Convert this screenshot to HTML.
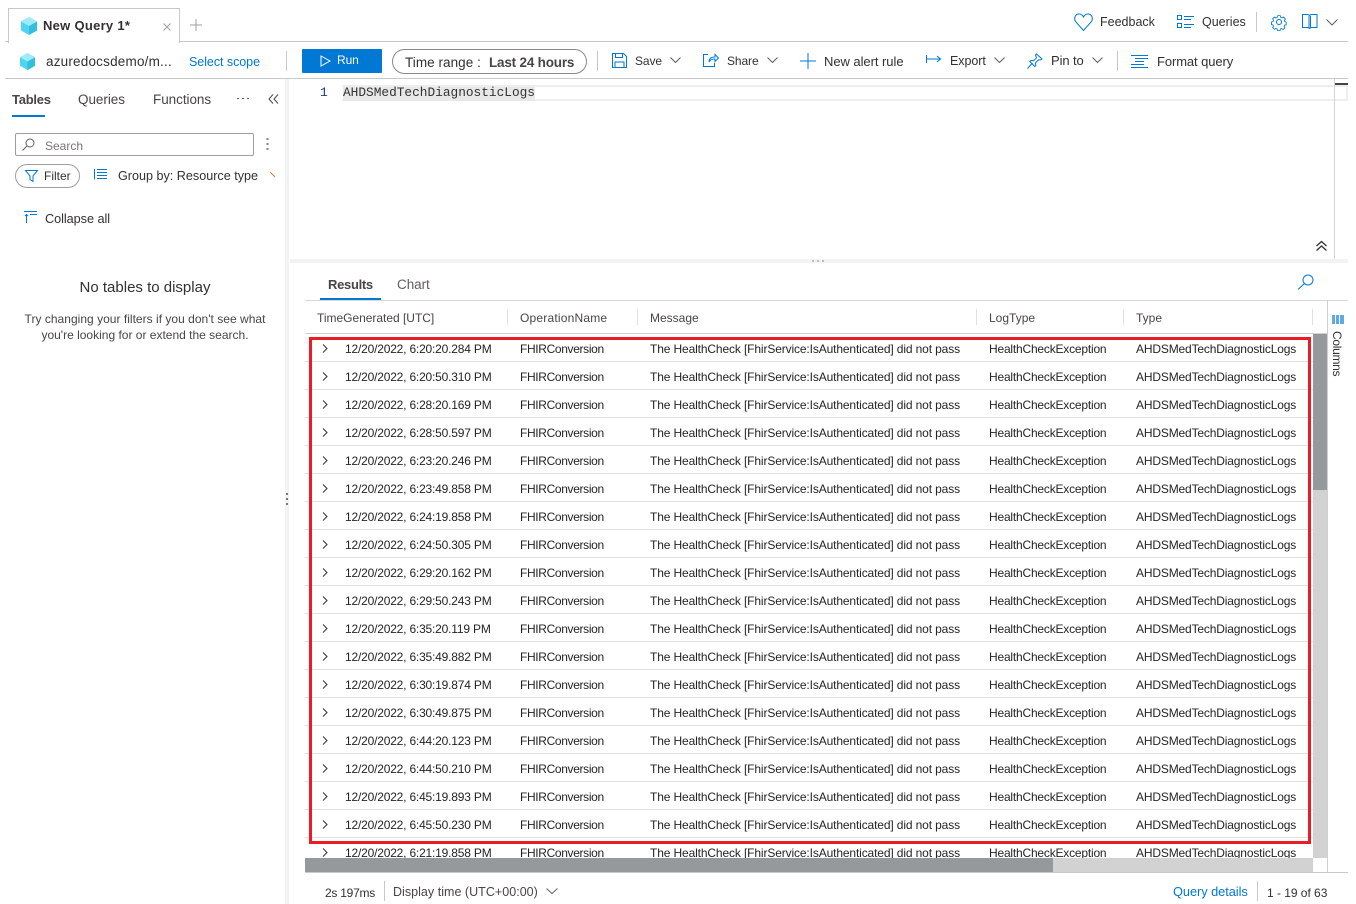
<!DOCTYPE html>
<html><head><meta charset="utf-8"><style>
html,body{margin:0;padding:0;background:#fff}
body{width:1356px;height:904px;overflow:hidden;position:relative;font-family:"Liberation Sans",sans-serif;font-size:12px;color:#323130}
.a{position:absolute;white-space:nowrap;line-height:16px}
.b{position:absolute}
.blue{color:#0078d4}
svg{position:absolute;overflow:visible;fill:none}
.ln{stroke:#0078d4;stroke-width:1}
.ch{stroke:#605e5c;stroke-width:1}
.r{position:absolute;left:305px;width:1008px;height:28px;margin-top:-1px;border-bottom:1px solid #e1e1e1;box-sizing:border-box;color:#252423}
.r span{position:absolute;top:7px;line-height:16px;white-space:nowrap}
.r svg{left:17px;top:10px}
.c1{left:40px;letter-spacing:-.19px}.c2{left:215px;letter-spacing:-.35px}.c3{left:345px;letter-spacing:-.13px}.c4{left:684px;letter-spacing:-.2px}.c5{left:831px;letter-spacing:-.16px}
</style></head><body>
<!-- top tabs -->
<div class="b" style="left:5px;top:41px;width:1343px;height:1px;background:#c8c8c8"></div>
<div class="b" style="left:8px;top:8px;width:172px;height:35px;background:#fff;border:1px solid #c8c8c8;border-bottom:none;box-sizing:border-box"></div>
<svg style="left:19px;top:16px" width="20" height="20" viewBox="0 0 20 20"><path d="M10 1l8 4.500v9L10 19l-8-4.500v-9z" fill="#50d4f2"/><path d="M10 10l8-4.500v9L10 19z" fill="#32bedd"/><path d="M10 1l8 4.500-8 4.500-8-4.500z" fill="#9cebff"/></svg>
<div class="a" style="left:43px;top:18px;font-size:13px;font-weight:bold;color:#323130;letter-spacing:.28px">New Query 1*</div>
<svg style="left:163px;top:23px" width="8" height="8"><path d="M.5.500l7 7M7.500.500l-7 7" stroke="#a19f9d"/></svg>
<svg style="left:190px;top:19px" width="12" height="12"><path d="M6 0v12M0 6h12" stroke="#a19f9d"/></svg>
<!-- top right -->
<svg style="left:1074px;top:13px" width="19" height="18" viewBox="0 0 19 18"><path class="ln" d="M9.500 17.500L1.500 8.500C-.5 5 1.500 1 5 1c2 0 3.500 1 4.500 3C10.500 2 12 1 14 1c3.500 0 5.500 4 3.500 7.500z"/></svg>
<div class="a" style="left:1100px;top:14px;font-size:12.500px">Feedback</div>
<svg style="left:1177px;top:15px" width="18" height="14"><path class="ln" d="M.5.500h4v4h-4zM.5 8.500h4v4h-4zM7 1.500h10M7 4.500h7M7 9.500h10M7 12.500h7"/></svg>
<div class="a" style="left:1202px;top:14px;font-size:12.500px">Queries</div>
<div class="b" style="left:1256px;top:12px;width:1px;height:20px;background:#c8c8c8"></div>
<svg style="left:1271px;top:14px" width="16" height="16" viewBox="0 0 16 16"><path class="ln" d="M6.500.500h3l.5 2 1.500.7 2-1 2 2.300-1.200 1.700.5 1.300 1.700.8v3l-2 .5-.5 1.300 1 1.700-2.200 2-1.800-1-1.300.5-.5 1.700h-3l-.5-1.900-1.300-.5-1.700 1-2.200-2 1-1.800-.5-1.300-1.900-.5v-3l1.900-.6.500-1.400-1-1.800 2.200-2 1.800 1 1.300-.6z" transform="translate(1.200 1.200) scale(.85)"/><circle class="ln" cx="8" cy="8" r="2.500"/></svg>
<svg style="left:1302px;top:14px" width="16" height="15"><path class="ln" d="M.5.500h5.500l1.500 1 1.500-1h6v13h-6l-1.500 1-1.500-1H.5zM7 2v12M8.500 2v12"/></svg>
<svg style="left:1326px;top:19px" width="12" height="7"><path d="M.5.500L6 6l5.500-5.500" class="ch"/></svg>
<!-- toolbar -->
<svg style="left:18px;top:53px" width="19" height="17" viewBox="0 0 19 17"><path d="M9.500 0l7.500 4.200v8.600L9.500 17 2 12.800V4.200z" fill="#50d4f2"/><path d="M9.500 8.500L17 4.200v8.600L9.500 17z" fill="#32bedd"/><path d="M9.500 0L17 4.200 9.500 8.500 2 4.200z" fill="#9cebff"/></svg>
<div class="a" style="left:46px;top:54px;font-size:13.500px;color:#323130;letter-spacing:.2px">azuredocsdemo/m...</div>
<div class="a blue" style="left:189px;top:54px;font-size:12.500px;letter-spacing:-.05px">Select scope</div>
<div class="b" style="left:286px;top:51px;width:1px;height:20px;background:#c8c8c8"></div>
<div class="b" style="left:302px;top:49px;width:80px;height:24px;background:#0078d4;border-radius:1px"></div>
<svg style="left:320px;top:55px" width="11" height="12"><path d="M1 1l9 5-9 5z" stroke="#fff"/></svg>
<div class="a" style="left:337px;top:52px;color:#fff;letter-spacing:-.1px">Run</div>
<div class="b" style="left:392px;top:49px;width:195px;height:25px;border:1px solid #8a8886;border-radius:13px;box-sizing:border-box"></div>
<div class="a" style="left:405px;top:55px;font-size:13.500px;letter-spacing:.05px;color:#323130">Time range :</div>
<div class="a" style="left:489px;top:55px;font-size:13.500px;font-weight:bold;letter-spacing:-.2px;color:#484644">Last 24 hours</div>
<div class="b" style="left:597px;top:51px;width:1px;height:20px;background:#c8c8c8"></div>
<svg style="left:612px;top:53px" width="15" height="15"><path class="ln" d="M.5.500h11l3 3v11H.5zM3.500.500v4h7v-4M3 14.500v-5.500h9v5.500"/></svg>
<div class="a" style="left:635px;top:53px;letter-spacing:-.1px">Save</div>
<svg style="left:670px;top:57px" width="11" height="6"><path d="M.5.500L5.500 5.500l5-5" class="ch"/></svg>
<svg style="left:703px;top:53px" width="16" height="15"><path class="ln" d="M5 1.500H.5v12h11V10M6 9c0-4 3-5 6-5V1.500L15.500 5 12 8.500V6c-3 0-5 1-6 3z"/></svg>
<div class="a" style="left:727px;top:53px;letter-spacing:-.1px">Share</div>
<svg style="left:767px;top:57px" width="11" height="6"><path d="M.5.500L5.500 5.500l5-5" class="ch"/></svg>
<svg style="left:800px;top:53px" width="16" height="16"><path d="M8 0v16M0 8h16" stroke="#0078d4" stroke-width="1"/></svg>
<div class="a" style="left:824px;top:54px;font-size:13px;letter-spacing:-.05px">New alert rule</div>
<svg style="left:926px;top:55px" width="15" height="9"><path class="ln" d="M.5 0v8M1 4h13M11 1l3.500 3L11 7"/></svg>
<div class="a" style="left:950px;top:53px;font-size:12.500px;letter-spacing:-.05px">Export</div>
<svg style="left:994px;top:57px" width="11" height="6"><path d="M.5.500L5.500 5.500l5-5" class="ch"/></svg>
<svg style="left:1027px;top:53px" width="16" height="16"><path class="ln" d="M.5 15.500l5-5.500M9.500 1l5.500 5-1.500 1-2-.2-3 3 .3 2.700-1 1-5-5 1-1 2.700.3 3-3L8.500 2z"/></svg>
<div class="a" style="left:1051px;top:53px;font-size:13px;letter-spacing:-.1px">Pin to</div>
<svg style="left:1092px;top:57px" width="11" height="6"><path d="M.5.500L5.500 5.500l5-5" class="ch"/></svg>
<div class="b" style="left:1117px;top:51px;width:1px;height:20px;background:#c8c8c8"></div>
<svg style="left:1131px;top:55px" width="18" height="13"><path class="ln" d="M0 .500h17M4 3.500h13M4 6.500h9M0 9.500h13M0 12.500h17"/></svg>
<div class="a" style="left:1157px;top:54px;font-size:13px;letter-spacing:-.1px">Format query</div>
<div class="b" style="left:5px;top:78px;width:1343px;height:1px;background:#c8c8c8"></div>
<!-- left tabs -->
<div class="a" style="left:12px;top:92px;font-size:13px;font-weight:bold;color:#484644;letter-spacing:-.25px">Tables</div>
<div class="b" style="left:12px;top:115px;width:33px;height:2px;background:#0078d4"></div>
<div class="a" style="left:78px;top:92px;font-size:13.500px;letter-spacing:-.05px;color:#484644">Queries</div>
<div class="a" style="left:153px;top:92px;font-size:13.500px;letter-spacing:-.05px;color:#484644">Functions</div>
<svg style="left:237px;top:98px" width="13" height="2"><path d="M0 .500h2M5 .500h2M10 .500h2" stroke="#605e5c"/></svg>
<svg style="left:268px;top:94px" width="11" height="10"><path d="M5 .500L1 5l4 4.500M10 .500L6 5l4 4.500" stroke="#484644" stroke-width="1"/></svg>
<!-- splitter -->
<div class="b" style="left:285px;top:79px;width:4px;height:825px;background:#f3f3f3"></div>
<div class="b" style="left:286px;top:493px;width:2px;height:2px;background:#777"></div>
<div class="b" style="left:286px;top:498px;width:2px;height:2px;background:#777"></div>
<div class="b" style="left:286px;top:503px;width:2px;height:2px;background:#777"></div>
<!-- search -->
<div class="b" style="left:15px;top:133px;width:239px;height:23px;border:1px solid #a19f9d;border-radius:2px;box-sizing:border-box"></div>
<svg style="left:22px;top:138px" width="13" height="13"><circle cx="8" cy="5" r="4" stroke="#605e5c"/><path d="M5 8L.5 12.500" stroke="#605e5c"/></svg>
<div class="a" style="left:45px;top:138px;color:#797775">Search</div>
<svg style="left:266px;top:138px" width="3" height="13"><path d="M.5 1h2M.5 6h2M.5 11h2" stroke="#605e5c" stroke-width="1.500"/></svg>
<div class="b" style="left:15px;top:164px;width:65px;height:24px;border:1px solid #a19f9d;border-radius:12px;box-sizing:border-box"></div>
<svg style="left:25px;top:170px" width="13" height="12"><path class="ln" d="M.5.500h12L8 6v5.500L5 9.500V6z"/></svg>
<div class="a" style="left:44px;top:168px">Filter</div>
<svg style="left:94px;top:169px" width="13" height="11"><path class="ln" d="M.5 0v10.500M3 .500h10M3 3.500h10M3 6.500h10M3 9.500h10"/></svg>
<div class="a" style="left:118px;top:168px;font-size:12.600px">Group by: Resource type</div>
<svg style="left:270px;top:172px" width="5" height="5"><path d="M0 0l5 5" stroke="#ca7b42"/></svg>
<svg style="left:24px;top:211px" width="14" height="13"><path class="ln" d="M0 .500h13M6 3.500h7M2.500 12V3.500M1 5l1.500-1.500L4 5"/></svg>
<div class="a" style="left:45px;top:211px;font-size:12.700px;letter-spacing:-.05px">Collapse all</div>
<div class="a" style="left:0;width:290px;text-align:center;top:280px;font-size:15px;color:#323130">No tables to display</div>
<div class="a" style="left:0;width:290px;text-align:center;top:311px;letter-spacing:.02px;color:#484644">Try changing your filters if you don't see what</div>
<div class="a" style="left:0;width:290px;text-align:center;top:327px;color:#484644">you're looking for or extend the search.</div>
<!-- editor -->
<div class="b" style="left:342px;top:85px;width:1006px;height:16px;border-top:2px solid #eee;border-bottom:2px solid #eee;border-right:2px solid #eee;box-sizing:border-box"></div>
<div class="a" style="left:320px;top:85px;font-family:'Liberation Mono',monospace;font-size:13px;color:#1e3a8a">1</div>
<div class="b" style="left:343px;top:87px;width:192px;height:14px;background:#e8e8e8"></div>
<div class="a" style="left:343px;top:85px;font-family:'Liberation Mono',monospace;font-size:12.800px;color:#333">AHDSMedTechDiagnosticLogs</div>
<div class="b" style="left:1334px;top:79px;width:1px;height:180px;background:#d4d4d4"></div>
<div class="b" style="left:1335px;top:83px;width:13px;height:2px;background:#444"></div>
<svg style="left:1316px;top:241px" width="11" height="10"><path d="M.5 5L5.500 .500l5 4.500M.5 9.500L5.500 5l5 4.500" stroke="#333" stroke-width="1.300"/></svg>
<div class="b" style="left:290px;top:259px;width:1058px;height:4px;background:#f3f3f3"></div>
<svg style="left:812px;top:260px" width="14" height="2"><path d="M0 1h2M5 1h2M10 1h2" stroke="#888"/></svg>
<!-- results tabs -->
<div class="a" style="left:328px;top:277px;font-size:13px;font-weight:bold;color:#484644;letter-spacing:-.3px">Results</div>
<div class="b" style="left:320px;top:298px;width:61px;height:2px;background:#0078d4"></div>
<div class="a" style="left:397px;top:277px;font-size:13.500px;color:#605e5c;letter-spacing:-.05px">Chart</div>
<svg style="left:1298px;top:274px" width="16" height="16"><circle class="ln" cx="10" cy="6" r="5"/><path class="ln" d="M6.500 9.500L0 15.500"/></svg>
<div class="b" style="left:305px;top:300px;width:1043px;height:1px;background:#d8d8d8"></div>
<!-- header -->
<div class="a" style="left:317px;top:310px;color:#484644;letter-spacing:-.02px">TimeGenerated [UTC]</div>
<div class="b" style="left:507px;top:309px;width:1px;height:16px;background:#e1e1e1"></div>
<div class="a" style="left:520px;top:310px;color:#484644;letter-spacing:.2px">OperationName</div>
<div class="b" style="left:637px;top:309px;width:1px;height:16px;background:#e1e1e1"></div>
<div class="a" style="left:650px;top:310px;color:#484644">Message</div>
<div class="b" style="left:976px;top:309px;width:1px;height:16px;background:#e1e1e1"></div>
<div class="a" style="left:989px;top:310px;color:#484644">LogType</div>
<div class="b" style="left:1123px;top:309px;width:1px;height:16px;background:#e1e1e1"></div>
<div class="a" style="left:1136px;top:310px;color:#484644">Type</div>
<div class="b" style="left:1312px;top:309px;width:1px;height:16px;background:#e1e1e1"></div>
<div class="b" style="left:305px;top:333px;width:1022px;height:1px;background:#d0d0d0"></div>
<!-- rows -->
<div class="b" style="left:0;top:0;width:1313px;height:858px;overflow:hidden">
<div class="r" style="top:335px"><svg width="6" height="9"><path d="M1 .500L5 4.500 1 8.500" stroke="#323130"/></svg><span class="c1">12/20/2022, 6:20:20.284 PM</span><span class="c2">FHIRConversion</span><span class="c3">The HealthCheck [FhirService:IsAuthenticated] did not pass</span><span class="c4">HealthCheckException</span><span class="c5">AHDSMedTechDiagnosticLogs</span></div>
<div class="r" style="top:363px"><svg width="6" height="9"><path d="M1 .500L5 4.500 1 8.500" stroke="#323130"/></svg><span class="c1">12/20/2022, 6:20:50.310 PM</span><span class="c2">FHIRConversion</span><span class="c3">The HealthCheck [FhirService:IsAuthenticated] did not pass</span><span class="c4">HealthCheckException</span><span class="c5">AHDSMedTechDiagnosticLogs</span></div>
<div class="r" style="top:391px"><svg width="6" height="9"><path d="M1 .500L5 4.500 1 8.500" stroke="#323130"/></svg><span class="c1">12/20/2022, 6:28:20.169 PM</span><span class="c2">FHIRConversion</span><span class="c3">The HealthCheck [FhirService:IsAuthenticated] did not pass</span><span class="c4">HealthCheckException</span><span class="c5">AHDSMedTechDiagnosticLogs</span></div>
<div class="r" style="top:419px"><svg width="6" height="9"><path d="M1 .500L5 4.500 1 8.500" stroke="#323130"/></svg><span class="c1">12/20/2022, 6:28:50.597 PM</span><span class="c2">FHIRConversion</span><span class="c3">The HealthCheck [FhirService:IsAuthenticated] did not pass</span><span class="c4">HealthCheckException</span><span class="c5">AHDSMedTechDiagnosticLogs</span></div>
<div class="r" style="top:447px"><svg width="6" height="9"><path d="M1 .500L5 4.500 1 8.500" stroke="#323130"/></svg><span class="c1">12/20/2022, 6:23:20.246 PM</span><span class="c2">FHIRConversion</span><span class="c3">The HealthCheck [FhirService:IsAuthenticated] did not pass</span><span class="c4">HealthCheckException</span><span class="c5">AHDSMedTechDiagnosticLogs</span></div>
<div class="r" style="top:475px"><svg width="6" height="9"><path d="M1 .500L5 4.500 1 8.500" stroke="#323130"/></svg><span class="c1">12/20/2022, 6:23:49.858 PM</span><span class="c2">FHIRConversion</span><span class="c3">The HealthCheck [FhirService:IsAuthenticated] did not pass</span><span class="c4">HealthCheckException</span><span class="c5">AHDSMedTechDiagnosticLogs</span></div>
<div class="r" style="top:503px"><svg width="6" height="9"><path d="M1 .500L5 4.500 1 8.500" stroke="#323130"/></svg><span class="c1">12/20/2022, 6:24:19.858 PM</span><span class="c2">FHIRConversion</span><span class="c3">The HealthCheck [FhirService:IsAuthenticated] did not pass</span><span class="c4">HealthCheckException</span><span class="c5">AHDSMedTechDiagnosticLogs</span></div>
<div class="r" style="top:531px"><svg width="6" height="9"><path d="M1 .500L5 4.500 1 8.500" stroke="#323130"/></svg><span class="c1">12/20/2022, 6:24:50.305 PM</span><span class="c2">FHIRConversion</span><span class="c3">The HealthCheck [FhirService:IsAuthenticated] did not pass</span><span class="c4">HealthCheckException</span><span class="c5">AHDSMedTechDiagnosticLogs</span></div>
<div class="r" style="top:559px"><svg width="6" height="9"><path d="M1 .500L5 4.500 1 8.500" stroke="#323130"/></svg><span class="c1">12/20/2022, 6:29:20.162 PM</span><span class="c2">FHIRConversion</span><span class="c3">The HealthCheck [FhirService:IsAuthenticated] did not pass</span><span class="c4">HealthCheckException</span><span class="c5">AHDSMedTechDiagnosticLogs</span></div>
<div class="r" style="top:587px"><svg width="6" height="9"><path d="M1 .500L5 4.500 1 8.500" stroke="#323130"/></svg><span class="c1">12/20/2022, 6:29:50.243 PM</span><span class="c2">FHIRConversion</span><span class="c3">The HealthCheck [FhirService:IsAuthenticated] did not pass</span><span class="c4">HealthCheckException</span><span class="c5">AHDSMedTechDiagnosticLogs</span></div>
<div class="r" style="top:615px"><svg width="6" height="9"><path d="M1 .500L5 4.500 1 8.500" stroke="#323130"/></svg><span class="c1">12/20/2022, 6:35:20.119 PM</span><span class="c2">FHIRConversion</span><span class="c3">The HealthCheck [FhirService:IsAuthenticated] did not pass</span><span class="c4">HealthCheckException</span><span class="c5">AHDSMedTechDiagnosticLogs</span></div>
<div class="r" style="top:643px"><svg width="6" height="9"><path d="M1 .500L5 4.500 1 8.500" stroke="#323130"/></svg><span class="c1">12/20/2022, 6:35:49.882 PM</span><span class="c2">FHIRConversion</span><span class="c3">The HealthCheck [FhirService:IsAuthenticated] did not pass</span><span class="c4">HealthCheckException</span><span class="c5">AHDSMedTechDiagnosticLogs</span></div>
<div class="r" style="top:671px"><svg width="6" height="9"><path d="M1 .500L5 4.500 1 8.500" stroke="#323130"/></svg><span class="c1">12/20/2022, 6:30:19.874 PM</span><span class="c2">FHIRConversion</span><span class="c3">The HealthCheck [FhirService:IsAuthenticated] did not pass</span><span class="c4">HealthCheckException</span><span class="c5">AHDSMedTechDiagnosticLogs</span></div>
<div class="r" style="top:699px"><svg width="6" height="9"><path d="M1 .500L5 4.500 1 8.500" stroke="#323130"/></svg><span class="c1">12/20/2022, 6:30:49.875 PM</span><span class="c2">FHIRConversion</span><span class="c3">The HealthCheck [FhirService:IsAuthenticated] did not pass</span><span class="c4">HealthCheckException</span><span class="c5">AHDSMedTechDiagnosticLogs</span></div>
<div class="r" style="top:727px"><svg width="6" height="9"><path d="M1 .500L5 4.500 1 8.500" stroke="#323130"/></svg><span class="c1">12/20/2022, 6:44:20.123 PM</span><span class="c2">FHIRConversion</span><span class="c3">The HealthCheck [FhirService:IsAuthenticated] did not pass</span><span class="c4">HealthCheckException</span><span class="c5">AHDSMedTechDiagnosticLogs</span></div>
<div class="r" style="top:755px"><svg width="6" height="9"><path d="M1 .500L5 4.500 1 8.500" stroke="#323130"/></svg><span class="c1">12/20/2022, 6:44:50.210 PM</span><span class="c2">FHIRConversion</span><span class="c3">The HealthCheck [FhirService:IsAuthenticated] did not pass</span><span class="c4">HealthCheckException</span><span class="c5">AHDSMedTechDiagnosticLogs</span></div>
<div class="r" style="top:783px"><svg width="6" height="9"><path d="M1 .500L5 4.500 1 8.500" stroke="#323130"/></svg><span class="c1">12/20/2022, 6:45:19.893 PM</span><span class="c2">FHIRConversion</span><span class="c3">The HealthCheck [FhirService:IsAuthenticated] did not pass</span><span class="c4">HealthCheckException</span><span class="c5">AHDSMedTechDiagnosticLogs</span></div>
<div class="r" style="top:811px"><svg width="6" height="9"><path d="M1 .500L5 4.500 1 8.500" stroke="#323130"/></svg><span class="c1">12/20/2022, 6:45:50.230 PM</span><span class="c2">FHIRConversion</span><span class="c3">The HealthCheck [FhirService:IsAuthenticated] did not pass</span><span class="c4">HealthCheckException</span><span class="c5">AHDSMedTechDiagnosticLogs</span></div>
<div class="r" style="top:839px"><svg width="6" height="9"><path d="M1 .500L5 4.500 1 8.500" stroke="#323130"/></svg><span class="c1">12/20/2022, 6:21:19.858 PM</span><span class="c2">FHIRConversion</span><span class="c3">The HealthCheck [FhirService:IsAuthenticated] did not pass</span><span class="c4">HealthCheckException</span><span class="c5">AHDSMedTechDiagnosticLogs</span></div>
</div>
<!-- red box -->
<div class="b" style="left:309px;top:337px;width:1002px;height:507px;border:3px solid #ed1c24;box-sizing:border-box"></div>
<!-- scrollbars -->
<div class="b" style="left:1313px;top:334px;width:14px;height:524px;background:#d2d2d2"></div>
<div class="b" style="left:1313px;top:334px;width:14px;height:156px;background:#96999b"></div>
<div class="b" style="left:305px;top:858px;width:1008px;height:15px;background:#d2d2d2"></div>
<div class="b" style="left:305px;top:858px;width:748px;height:15px;background:#96999b"></div>
<div class="b" style="left:1327px;top:300px;width:1px;height:573px;background:#d0d0d0"></div>
<div class="b" style="left:305px;top:872px;width:1043px;height:1px;background:#c8c8c8"></div>
<!-- columns -->
<svg style="left:1332px;top:314px" width="12" height="10"><rect width="12" height="10" fill="#5ea9e6"/><path d="M3.500 0v10M7.500 0v10M0 .500h12" stroke="#fff" stroke-width="1"/></svg>
<div class="a" style="left:1329px;top:331px;width:30px;transform:rotate(90deg);transform-origin:8px 8px;letter-spacing:-.3px;color:#323130">Columns</div>
<!-- footer -->
<div class="a" style="left:325px;top:885px;letter-spacing:-.25px">2s 197ms</div>
<div class="b" style="left:384px;top:881px;width:1px;height:20px;background:#c8c8c8"></div>
<div class="a" style="left:393px;top:884px;font-size:12.500px;letter-spacing:.03px;color:#484644">Display time (UTC+00:00)</div>
<svg style="left:546px;top:888px" width="12" height="6"><path d="M.5.500L6 5.500l5.500-5" class="ch"/></svg>
<div class="a blue" style="left:1173px;top:884px;font-size:12.800px;letter-spacing:-.05px">Query details</div>
<div class="b" style="left:1257px;top:881px;width:1px;height:20px;background:#c8c8c8"></div>
<div class="a" style="left:1267px;top:885px;letter-spacing:-.03px">1 - 19 of 63</div>
</body></html>
